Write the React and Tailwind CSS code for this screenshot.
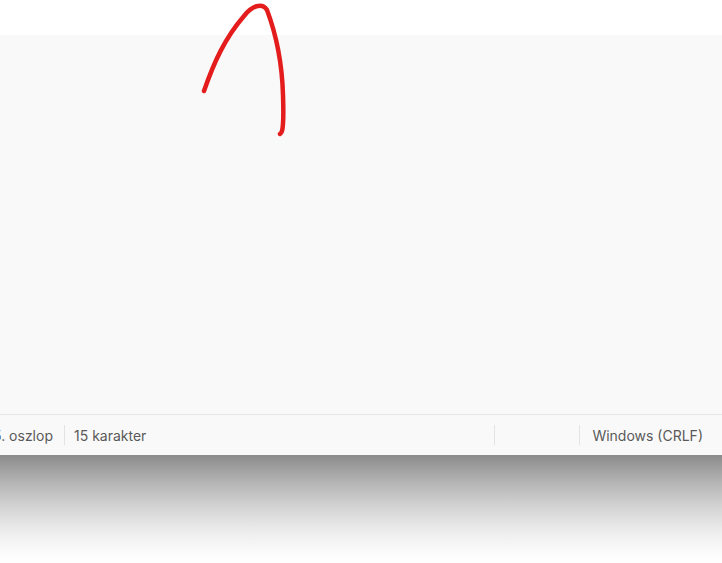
import React from 'react';

export default function App() {
  return (
    <div className="relative w-[722px] h-[563px] bg-white overflow-hidden" style={{ fontFamily: '"Segoe UI", Inter, "Noto Sans", sans-serif' }}>
      {/* title strip */}
      <div className="h-[35px] bg-white" />

      {/* editor area */}
      <div className="h-[380px] bg-[#f9f9f9] border-b border-[#e6e6e6]" />

      {/* status bar */}
      <div className="h-[40px] bg-[#f9f9f9] flex items-center text-[14px] text-[#595959]">
        <span className="ml-[-7px] pr-[11px] whitespace-nowrap">5. oszlop</span>
        <div className="w-px h-[20px] bg-[#e3e3e3]" />
        <span className="pl-[9px] whitespace-nowrap">15 karakter</span>
        <div className="flex-1" />
        <div className="w-px h-[20px] bg-[#e3e3e3]" />
        <div className="w-[84px]" />
        <div className="w-px h-[20px] bg-[#e3e3e3]" />
        <span className="pl-[12px] pr-[19px] whitespace-nowrap">Windows (CRLF)</span>
      </div>

      {/* drop shadow below window */}
      <div className="h-[108px] bg-[linear-gradient(to_bottom,#8b8b8b_0%,#b4b4b4_25%,#d6d6d6_50%,#eeeeee_72%,#fcfcfc_92%,#ffffff_100%)]" />

      {/* red pen stroke */}
      <svg className="absolute left-0 top-0 pointer-events-none" width="722" height="563">
        <path
          d="M204 91 C 214 62, 225 38, 244 16 C 252 6, 262 2, 267 10 C 276 34, 282 60, 283 95 C 283.5 112, 284 124, 282 131 C 281.5 132.5, 281 133.5, 280 134"
          fill="none"
          stroke="#e41c1c"
          strokeWidth="4.5"
          strokeLinecap="round"
          strokeLinejoin="round"
        />
      </svg>
    </div>
  );
}
